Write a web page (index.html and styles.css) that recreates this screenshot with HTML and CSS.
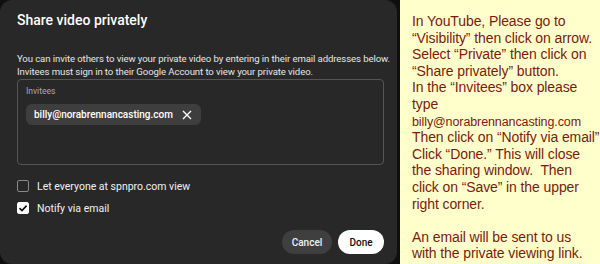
FILE: index.html
```html
<!DOCTYPE html>
<html lang="en">
<head>
  <meta charset="UTF-8">
  <title>Share video privately</title>
  <link rel="stylesheet" href="styles.css">
</head>
<body>
<div class="dialog">
  <h2>Share video privately</h2>
  <p class="desc">You can invite others to view your private video by entering in their email addresses below.<br>
  Invitees must sign in to their Google Account to view your private video.</p>
  <div class="invitees">
    <div class="label">Invitees</div>
    <div class="chip">
      <span>billy@norabrennancasting.com</span>
      <svg width="10" height="10" viewBox="0 0 10 10"><path d="M1 1L9 9M9 1L1 9" stroke="#fff" stroke-width="1.4" fill="none"/></svg>
    </div>
  </div>
  <label class="check">
    <span class="box"></span>
    Let everyone at spnpro.com view
  </label>
  <label class="check">
    <span class="box on"><svg width="10" height="10" viewBox="0 0 10 10"><path d="M1.5 5.2L4 7.6L8.6 2.6" stroke="#0f0f0f" stroke-width="1.6" fill="none"/></svg></span>
    Notify via email
  </label>
  <div class="actions">
    <button class="cancel">Cancel</button>
    <button class="done">Done</button>
  </div>
</div>
<div class="notes">
  In YouTube, Please go to<br>
  &ldquo;Visibility&rdquo; then click on arrow.<br>
  Select &ldquo;Private&rdquo; then click on<br>
  &ldquo;Share privately&rdquo; button.<br>
  In the &ldquo;Invitees&rdquo; box please<br>
  type<br>
  <span class="mail">billy@norabrennancasting.com</span><br>
  Then click on &ldquo;Notify via email&rdquo;<br>
  Click &ldquo;Done.&rdquo; This will close<br>
  the sharing window.&nbsp; Then<br>
  click on &ldquo;Save&rdquo; in the upper<br>
  right corner.<br>
  <br>
  An email will be sent to us<br>
  with the private viewing link.
</div>
</body>
</html>
```

FILE: styles.css
```css
html, body { margin: 0; padding: 0; }
body { width: 600px; height: 264px; overflow: hidden; display: flex;
  background: #0f0f0f; font-family: Roboto, "Noto Sans", sans-serif; }

.dialog { width: 397px; height: 264px; box-sizing: border-box;
  background: #282828; border-radius: 12px; color: #f1f1f1;
  padding: 9px 13px 0 17px; display: flex; flex-direction: column; }
h2 { margin: 0; font-size: 14px; font-weight: 500; line-height: 22px; color: #fff; }
.desc { margin: 21px 0 0; font-size: 9.6px; line-height: 13px; color: #e6e6e6;
  white-space: nowrap; letter-spacing: -0.1px; }

.invitees { margin-top: 1px; height: 86px; border: 1px solid #555; border-radius: 4px;
  padding: 5px 8px 0; box-sizing: border-box; }
.label { font-size: 8.5px; color: #aaa; line-height: 12px; }
.chip { display: inline-flex; align-items: center; gap: 9px; margin-top: 7px;
  height: 21px; padding: 0 9px 0 8px; background: #3e3e3e; border-radius: 6px;
  font-size: 10px; font-weight: 500; color: #fff; }

.check { display: flex; align-items: center; gap: 8px; font-size: 10.5px;
  color: #f1f1f1; height: 22px; }
.check:first-of-type { margin-top: 10px; }
.box { width: 12px; height: 12px; box-sizing: border-box; border: 1.5px solid #8a8a8a;
  border-radius: 2px; display: flex; align-items: center; justify-content: center; }
.box.on { background: #fff; border-color: #fff; }

.actions { display: flex; justify-content: flex-end; gap: 6px; margin-top: 11px; }
button { height: 24px; border: none; border-radius: 12px; font-family: inherit;
  font-size: 10px; font-weight: 500; padding: 0; }
.cancel { background: #3f3f3f; color: #f1f1f1; width: 50px; }
.done { background: #fff; color: #0f0f0f; width: 46px; }

.notes { width: 200px; margin-left: 3px; background: #ffffcc; color: #7a1a0c;
  font-family: "Liberation Sans", Arial, sans-serif; font-size: 14px; line-height: 16.6px;
  letter-spacing: -0.1px; padding: 13px 0 0 12px; box-sizing: border-box;
  white-space: nowrap; overflow: hidden; }
.mail { font-size: 12.5px; letter-spacing: -0.1px; line-height: 1; }
```
